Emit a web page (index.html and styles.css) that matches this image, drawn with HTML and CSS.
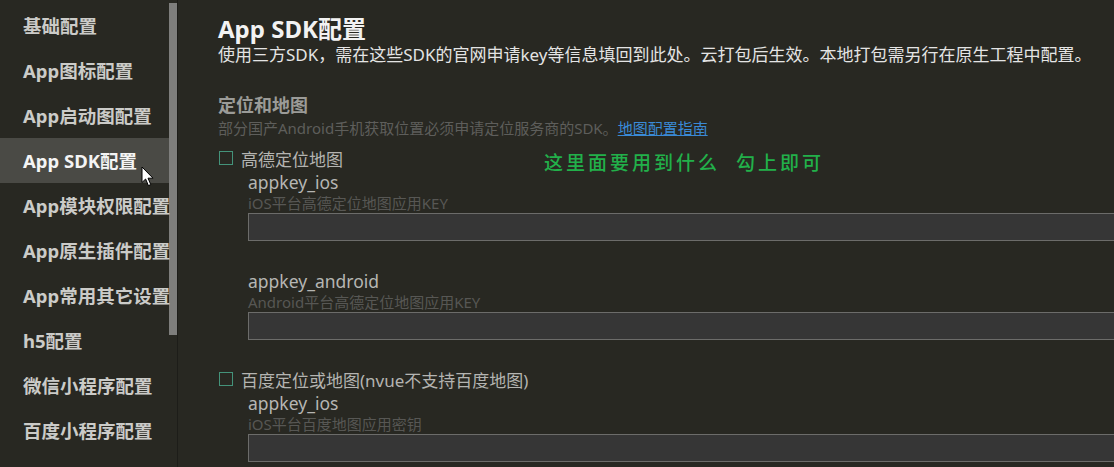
FILE: index.html
```html
<!DOCTYPE html>
<html lang="zh-CN">
<head>
<meta charset="utf-8">
<title>App SDK配置</title>
<link rel="stylesheet" href="styles.css">
</head>
<body>
<div class="app">
  <aside class="sidebar">
    <ul class="nav">
      <li class="nav-item">基础配置</li>
      <li class="nav-item">App图标配置</li>
      <li class="nav-item">App启动图配置</li>
      <li class="nav-item active">App SDK配置
        <svg class="cursor" width="14" height="21" viewBox="0 0 14 21"><path d="M1 1 L1 16.5 L4.6 13 L7.4 19.6 L9.8 18.6 L7 12.2 L12 12.2 Z" fill="#fff" stroke="#000" stroke-width="1" stroke-linejoin="miter"/></svg>
      </li>
      <li class="nav-item">App模块权限配置</li>
      <li class="nav-item">App原生插件配置</li>
      <li class="nav-item">App常用其它设置</li>
      <li class="nav-item">h5配置</li>
      <li class="nav-item">微信小程序配置</li>
      <li class="nav-item">百度小程序配置</li>
    </ul>
    <div class="track"><div class="thumb"></div></div>
  </aside>
  <main class="main">
    <h1 class="title">App SDK配置</h1>
    <p class="desc">使用三方SDK，需在这些SDK的官网申请key等信息填回到此处。云打包后生效。本地打包需另行在原生工程中配置。</p>

    <h2 class="section">定位和地图</h2>
    <p class="hint">部分国产Android手机获取位置必须申请定位服务商的SDK。<a class="link" href="#">地图配置指南</a></p>

    <div class="check-row">
      <span class="box"></span><span class="check-label">高德定位地图</span>
      <span class="note">这里面要用到什么&nbsp;&nbsp;勾上即可</span>
    </div>
    <div class="field">
      <div class="field-name">appkey_ios</div>
      <div class="field-hint">iOS平台高德定位地图应用KEY</div>
      <div class="input"></div>
    </div>
    <div class="field spaced">
      <div class="field-name">appkey_android</div>
      <div class="field-hint">Android平台高德定位地图应用KEY</div>
      <div class="input"></div>
    </div>

    <div class="check-row second">
      <span class="box"></span><span class="check-label">百度定位或地图(nvue不支持百度地图)</span>
    </div>
    <div class="field">
      <div class="field-name">appkey_ios</div>
      <div class="field-hint">iOS平台百度地图应用密钥</div>
      <div class="input"></div>
    </div>
  </main>
</div>
</body>
</html>
```

FILE: styles.css
```css
* { box-sizing: border-box; }
html, body {
  margin: 0;
  padding: 0;
  background: #282822;
  width: 1114px;
  height: 467px;
  overflow: hidden;
  font-family: "Noto Sans", "Noto Sans CJK SC", sans-serif;
}
.app {
  display: flex;
  height: 467px;
}
.sidebar {
  display: flex;
  flex: 0 0 178px;
  border-right: 1px solid #1d1d19;
  background: #282822;
}
.nav {
  list-style: none;
  margin: 0;
  padding: 3px 0 0;
  width: 169px;
}
.nav-item {
  position: relative;
  height: 45px;
  line-height: 45px;
  padding-left: 23px;
  font-size: 18.5px;
  font-weight: 700;
  color: #cbcbc8;
  white-space: nowrap;
  overflow: visible;
}
.nav-item.active {
  background: #4a4a45;
  color: #f4f4f4;
}
.cursor {
  position: absolute;
  left: 141px;
  top: 28px;
}
.track {
  width: 8px;
  padding-top: 3px;
}
.thumb {
  height: 332px;
  background: #7e7e7c;
}
.main {
  flex: 1;
  padding: 14px 0 0 40px;
  overflow: hidden;
  color: #e8e8e8;
}
.title {
  margin: 0;
  font-size: 24px;
  line-height: 30px;
  font-weight: 700;
  color: #f2f2f2;
}
.desc {
  margin: 0;
  font-size: 17px;
  line-height: 22px;
  color: #e4e4e4;
  white-space: nowrap;
}
.section {
  margin: 27px 0 0;
  font-size: 18px;
  line-height: 24px;
  font-weight: 700;
  color: #9b9b98;
}
.hint {
  margin: 0;
  font-size: 15px;
  line-height: 22px;
  color: #5e5e5b;
  white-space: nowrap;
}
.link {
  color: #3a8ad6;
  text-decoration: underline;
}
.check-row {
  position: relative;
  display: flex;
  align-items: center;
  height: 24px;
  margin-top: 7px;
}
.check-row.second {
  margin-top: 27px;
}
.box {
  width: 14px;
  height: 14px;
  margin-left: 1px;
  border: 1.5px solid #44937a;
}
.check-label {
  margin-left: 8px;
  font-size: 17px;
  color: #b4b4b1;
  white-space: nowrap;
}
.note {
  position: absolute;
  left: 326px;
  top: 2px;
  font-size: 19px;
  font-weight: 500;
  letter-spacing: 3px;
  color: #22b04a;
  white-space: nowrap;
}
.field {
  padding-left: 30px;
}
.field.spaced {
  margin-top: 28px;
}
.field-name {
  font-size: 17.5px;
  line-height: 24px;
  color: #b6b6b3;
}
.field-hint {
  font-size: 15px;
  line-height: 19px;
  color: #575754;
  white-space: nowrap;
}
.input {
  width: 900px;
  height: 28px;
  background: #363636;
  border: 1px solid #6c6c6a;
}
```
